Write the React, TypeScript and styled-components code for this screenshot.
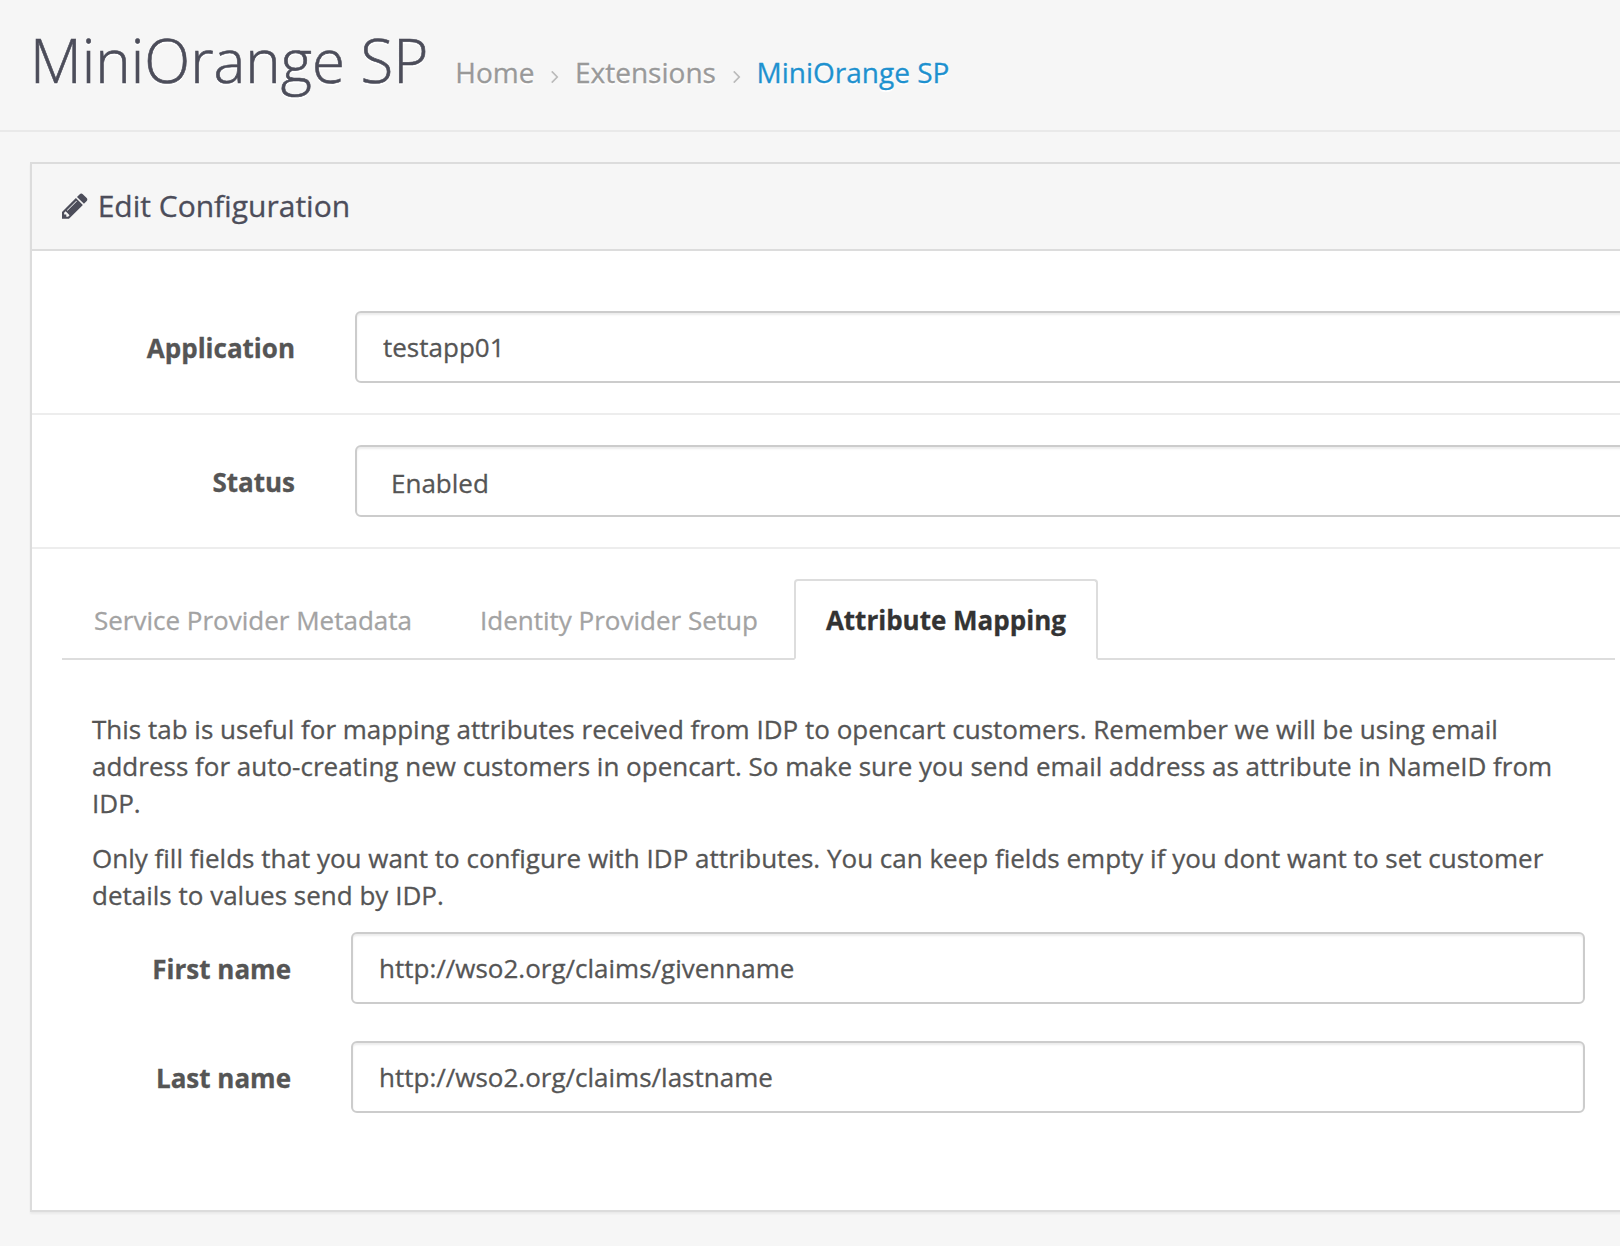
import React from "react";
import styled, { createGlobalStyle, css } from "styled-components";

const GlobalStyle = createGlobalStyle`
  *, *::before, *::after { box-sizing: border-box; }
  body {
    margin: 0;
    background: #f6f6f6;
    color: #555;
    font-family: "Open Sans", "Noto Sans", sans-serif;
    font-size: 26px;
    line-height: 37px;
    overflow: hidden;
    -webkit-text-stroke: 0.3px currentColor;
  }
`;

const Page = styled.div`
  width: 1620px;
  height: 1246px;
  overflow: hidden;
`;

const PageHeader = styled.header`
  display: flex;
  align-items: baseline;
  height: 132px;
  padding: 18px 0 0 30px;
  border-bottom: 2px solid #e9e9e9;
  text-shadow: 0 2px #fff;
`;

const Title = styled.h1`
  margin: 0;
  color: #4c4d5a;
  font-size: 60px;
  font-weight: 300;
  line-height: 84px;
  white-space: nowrap;
  -webkit-text-stroke-width: 0.6px;
`;

const Breadcrumb = styled.ul`
  display: flex;
  align-items: baseline;
  margin: 0 0 0 27px;
  padding: 0;
  list-style: none;
  font-size: 28px;
`;

const Crumb = styled.li<{ $current?: boolean }>`
  color: ${(p) => (p.$current ? "#1e91cf" : "#999")};
  white-space: nowrap;
`;

const CrumbArrow = styled.svg`
  width: 7.6px;
  height: 12px;
  margin: 0 16px 0 17px;
  fill: #bbb;
`;

const Panel = styled.section`
  width: 1640px;
  height: 1050px;
  margin: 30px 0 0 30px;
  background: #fff;
  border: 2px solid #dcdcdc;
  box-shadow: 0 2px 2px rgba(0, 0, 0, 0.05);
`;

const PanelHeading = styled.div`
  display: flex;
  align-items: center;
  height: 87px;
  padding: 0 30px 2px;
  background: #f6f6f6;
  border-bottom: 2px solid #dcdcdc;
  color: #4c4d5a;
`;

const PencilIcon = styled.svg`
  width: 25.7px;
  height: 30px;
  margin-right: 10px;
  fill: currentColor;
`;

const PanelTitle = styled.h3`
  margin: 0;
  font-size: 30px;
  font-weight: 400;
`;

const PanelBody = styled.div`
  padding-top: 30px;
`;

const FormRow = styled.div`
  display: grid;
  grid-template-columns: 263px 1fr;
  column-gap: 60px;
  padding: 30px 0;
  border-bottom: 2px solid #ededed;
`;

const Label = styled.label`
  padding-top: 19px;
  color: #555;
  font-weight: 700;
  text-align: right;
  white-space: nowrap;
`;

const control = css`
  width: 100%;
  height: 72px;
  border: 2px solid #ccc;
  border-radius: 6px;
  background: #fff;
  color: #555;
  font: inherit;
  box-shadow: inset 0 2px 2px rgba(0, 0, 0, 0.075);
`;

const TextInput = styled.input`
  ${control}
  padding: 0 26px;
  outline: none;
`;

const SelectBox = styled.div`
  ${control}
  display: flex;
  align-items: center;
  padding: 4px 34px 0;
`;

const TabList = styled.ul`
  display: flex;
  width: 1553px;
  height: 81px;
  margin: 30px 0 0 30px;
  padding: 0;
  list-style: none;
  border-bottom: 2px solid #ddd;
`;

const Tab = styled.li<{ $active?: boolean }>`
  height: 81px;
  margin-right: 4px;
  padding: 21px 30px 19px;
  border: 2px solid ${(p) => (p.$active ? "#ddd" : "transparent")};
  border-bottom-color: ${(p) => (p.$active ? "#fff" : "transparent")};
  border-radius: 4px 4px 0 0;
  background: ${(p) => (p.$active ? "#fff" : "none")};
  color: ${(p) => (p.$active ? "#333" : "#a3a3a3")};
  font-weight: ${(p) => (p.$active ? 700 : 400)};
  white-space: nowrap;
`;

const TabContent = styled.div`
  width: 1493px;
  margin: 51px 0 0 60px;
`;

const Paragraph = styled.p`
  margin: 0 0 18px;
`;

const AttributeRow = styled.div`
  display: grid;
  grid-template-columns: 199px 1234px;
  column-gap: 60px;
  margin-bottom: 37px;
`;

const Arrow = () => (
  <CrumbArrow viewBox="0 461 608 998">
    <path d="M595 960q0 13-10 23l-466 466q-10 10-23 10t-23-10l-50-50q-10-10-10-23t10-23l393-393-393-393q-10-10-10-23t10-23l50-50q10-10 23-10t23 10l466 466q10 10 10 23z" />
  </CrumbArrow>
);

const attributes = [
  { label: "First name", value: "http://wso2.org/claims/givenname" },
  { label: "Last name", value: "http://wso2.org/claims/lastname" },
];

export default function App() {
  return (
    <Page>
      <GlobalStyle />
      <PageHeader>
        <Title>MiniOrange SP</Title>
        <Breadcrumb>
          <Crumb>Home</Crumb>
          <Arrow />
          <Crumb>Extensions</Crumb>
          <Arrow />
          <Crumb $current>MiniOrange SP</Crumb>
        </Breadcrumb>
      </PageHeader>
      <Panel>
        <PanelHeading>
          <PencilIcon viewBox="0 0 1536 1792">
            <path d="M363 1536l91-91-235-235-91 91v107h128v128h107zM886 608q0-22-22-22-10 0-17 7l-542 542q-7 7-7 17 0 22 22 22 10 0 17-7l542-542q7-7 7-17zM832 416l416 416-832 832h-416v-416zM1515 512q0 53-37 90l-166 166-416-416 166-165q36-38 90-38 53 0 91 38l235 234q37 39 37 91z" />
          </PencilIcon>
          <PanelTitle>Edit Configuration</PanelTitle>
        </PanelHeading>
        <PanelBody>
          <FormRow>
            <Label>Application</Label>
            <TextInput defaultValue="testapp01" />
          </FormRow>
          <FormRow>
            <Label>Status</Label>
            <SelectBox>Enabled</SelectBox>
          </FormRow>
          <TabList>
            <Tab>Service Provider Metadata</Tab>
            <Tab>Identity Provider Setup</Tab>
            <Tab $active>Attribute Mapping</Tab>
          </TabList>
          <TabContent>
            <Paragraph>
              This tab is useful for mapping attributes received from IDP to opencart customers. Remember we will be
              using email address for auto-creating new customers in opencart. So make sure you send email address as
              attribute in NameID from IDP.
            </Paragraph>
            <Paragraph>
              Only fill fields that you want to configure with IDP attributes. You can keep fields empty if you dont
              want to set customer details to values send by IDP.
            </Paragraph>
            {attributes.map((a) => (
              <AttributeRow key={a.label}>
                <Label>{a.label}</Label>
                <TextInput defaultValue={a.value} />
              </AttributeRow>
            ))}
          </TabContent>
        </PanelBody>
      </Panel>
    </Page>
  );
}
